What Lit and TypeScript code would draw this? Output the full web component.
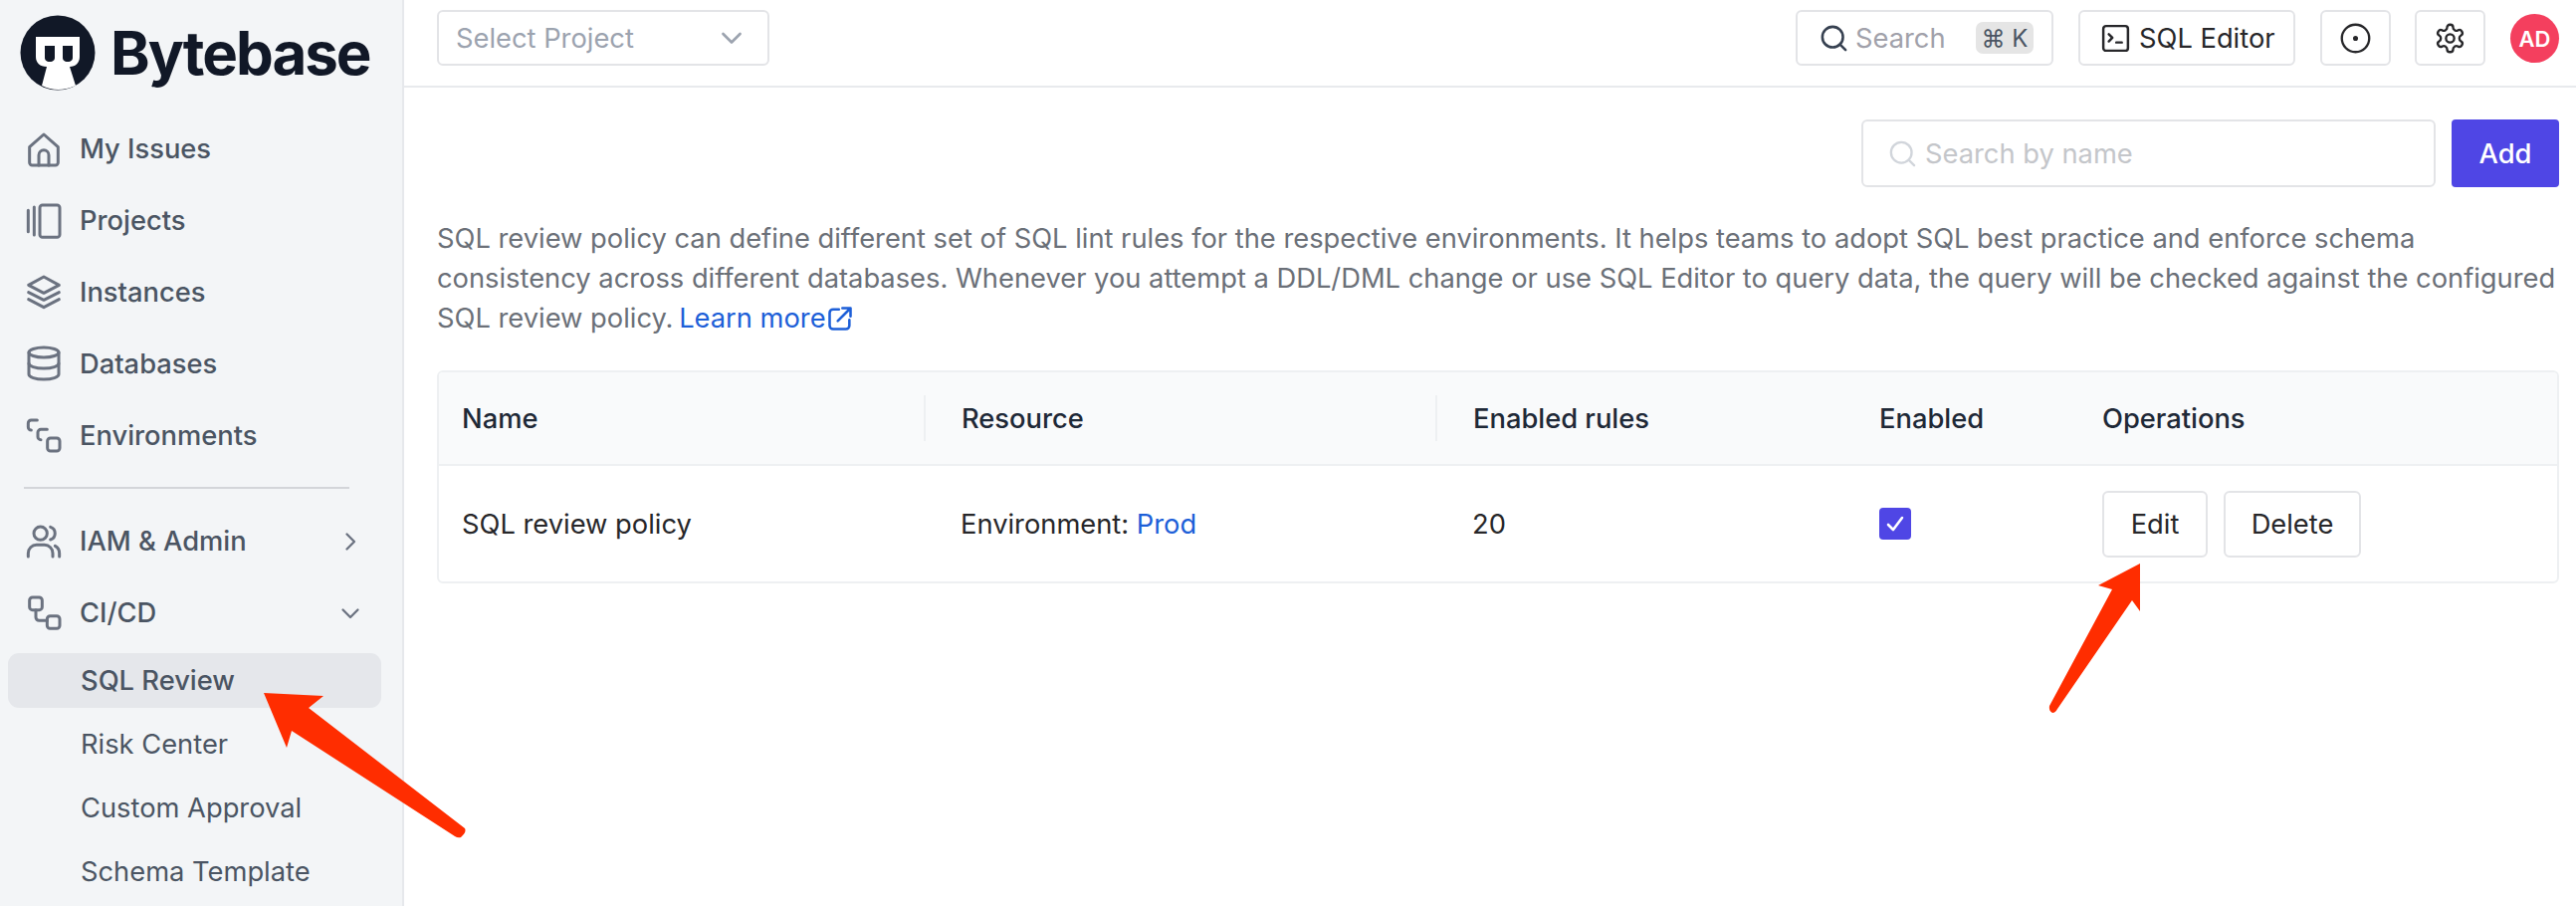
import { LitElement, html, css, svg } from "lit";
import { customElement } from "lit/decorators.js";

const ic = (body: unknown, cls = "ic") => html`<svg class=${cls} viewBox="0 0 24 24" fill="none" stroke="currentColor" stroke-linecap="round" stroke-linejoin="round">${body}</svg>`;

const icons = {
  home: svg`<path d="M3.4 10.6 12 3l8.6 7.6V20a1.6 1.6 0 0 1-1.6 1.6H5A1.6 1.6 0 0 1 3.4 20z"/><path d="M9 21.6V15.5a3 3 0 0 1 6 0v6.1"/>`,
  projects: svg`<path d="M2.6 5.5v13M6.2 3.6v16.8"/><rect x="9.6" y="2.4" width="12" height="19.4" rx="1.6"/>`,
  layers: svg`<path d="M12 3 2.8 8 12 12.8 21.2 8z"/><path d="M2.8 12.4 12 17l9.2-4.6"/><path d="M2.8 16.6 12 21.4l9.2-4.8"/>`,
  db: svg`<ellipse cx="12" cy="5.4" rx="9" ry="3"/><path d="M3 5.4v13.2c0 1.7 4 3 9 3s9-1.3 9-3V5.4"/><path d="M3 12c0 1.7 4 3 9 3s9-1.3 9-3"/>`,
  env: svg`<path d="M8 3H4.4A1.8 1.8 0 0 0 2.6 4.8v2.4c0 1 .8 1.8 1.8 1.8"/><path d="M14 8.6h-3.8a1.8 1.8 0 0 0-1.8 1.8v2.6c0 1 .8 1.8 1.8 1.8"/><rect x="14.2" y="13.8" width="7.4" height="7.8" rx="1.8"/>`,
  users: svg`<circle cx="10" cy="7" r="4"/><path d="M2.6 21v-2a5 5 0 0 1 5-5h4.8a5 5 0 0 1 5 5v2"/><path d="M16 3.2a4 4 0 0 1 0 7.6"/><path d="M21.4 21v-2a5 5 0 0 0-2.6-4.4"/>`,
  flow: svg`<rect x="3.4" y="2.4" width="7.6" height="7.6" rx="1.8"/><rect x="14" y="13.6" width="7.6" height="7.6" rx="1.8"/><path d="M7.2 10v4.4c0 1.1.9 2 2 2H14"/>`,
  right: svg`<path d="m9 5.6 6.4 6.4L9 18.4"/>`,
  down: svg`<path d="m5.6 9 6.4 6.4L18.4 9"/>`,
  search: svg`<circle cx="11" cy="11" r="8"/><path d="m21 21-4.3-4.3"/>`,
  term: svg`<rect x="3" y="3" width="18" height="18" rx="2"/><path d="m7 9 2.6 2.6L7 14.2M12.5 15h4"/>`,
  dot: svg`<circle cx="12" cy="12" r="10"/><circle cx="12" cy="12" r="1" fill="currentColor"/>`,
  gear: svg`<path d="M12.2 2h-.4a2 2 0 0 0-2 2v.2a2 2 0 0 1-1 1.7l-.4.3a2 2 0 0 1-2 0l-.2-.1a2 2 0 0 0-2.7.7l-.2.4a2 2 0 0 0 .7 2.7l.2.1a2 2 0 0 1 1 1.7v.5a2 2 0 0 1-1 1.8l-.2.1a2 2 0 0 0-.7 2.7l.2.4a2 2 0 0 0 2.7.7l.2-.1a2 2 0 0 1 2 0l.4.3a2 2 0 0 1 1 1.7v.2a2 2 0 0 0 2 2h.4a2 2 0 0 0 2-2v-.2a2 2 0 0 1 1-1.7l.4-.3a2 2 0 0 1 2 0l.2.1a2 2 0 0 0 2.7-.7l.2-.4a2 2 0 0 0-.7-2.7l-.2-.1a2 2 0 0 1-1-1.8v-.5a2 2 0 0 1 1-1.7l.2-.1a2 2 0 0 0 .7-2.7l-.2-.4a2 2 0 0 0-2.7-.7l-.2.1a2 2 0 0 1-2 0l-.4-.3a2 2 0 0 1-1-1.7V4a2 2 0 0 0-2-2z"/><circle cx="12" cy="12" r="3"/>`,
  ext: svg`<path d="M11 4H6a3 3 0 0 0-3 3v11a3 3 0 0 0 3 3h11a3 3 0 0 0 3-3v-5"/><path d="M14 3h7v7M21 3 10 14"/>`,
};

@customElement("app-root")
export class AppRoot extends LitElement {
  static styles = css`
    :host { display: block; height: 910px; overflow: hidden; position: relative; background: #fff; font-family: Inter, "Noto Sans", sans-serif; font-size: 27.3px; color: #1f2937; }
    * { box-sizing: border-box; }
    .app { display: flex; height: 910px; }
    .side { width: 406px; flex: none; background: #f3f5f7; border-right: 2px solid #e6e8ec; display: flex; flex-direction: column; overflow: hidden; }
    .logo { height: 114px; flex: none; display: flex; align-items: flex-start; padding: 15px 0 0 20px; gap: 15px; }
    .logo svg { width: 76px; height: 76px; flex: none; }
    .logo span { font-size: 60px; font-weight: 700; color: #111827; line-height: 70px; letter-spacing: -2px; margin-top: 3px; }
    .row { height: 71.8px; flex: none; display: flex; align-items: center; padding-left: 24px; padding-right: 38px; color: #4b5563; font-weight: 500; }
    .row .ic { width: 40px; height: 40px; stroke-width: 1.8; color: #6b7280; margin-right: 16px; flex: none; }
    .row .chev { width: 28px; height: 28px; stroke-width: 2; color: #6b7280; margin-left: auto; margin-right: 0; }
    .rule { height: 2px; background: #d3d5d9; margin: 16px 53px 17px 24px; flex: none; }
    .sub { height: 55px; flex: none; margin: 0 21px 9px 8px; padding-left: 73px; display: flex; align-items: center; border-radius: 11px; color: #4b5563; }
    .subs { margin-top: 4px; display: flex; flex-direction: column; }
    .sub.on { background: #e5e7eb; font-weight: 500; }
    .main { flex: 1; min-width: 0; display: flex; flex-direction: column; }
    .top { height: 88px; flex: none; border-bottom: 2px solid #e8eaed; display: flex; align-items: flex-start; padding: 10px 17px 0 33px; }
    .box { height: 56px; border: 2px solid #e3e4e7; border-radius: 6px; display: flex; align-items: center; background: #fff; }
    .select { width: 334px; padding: 0 20px 0 17px; color: #9ca3af; justify-content: space-between; }
    .select .ic { width: 32px; height: 32px; stroke-width: 2; }
    .spacer { flex: 1; }
    .gsearch { width: 259px; padding: 0 18px 0 21px; margin-right: 25px; color: #a1a1aa; }
    .gsearch .ic { width: 31px; height: 31px; stroke-width: 2; color: #374151; margin-right: 6px; flex: none; }
    kbd { font: inherit; font-size: 24px; margin-left: auto; width: 58px; height: 32px; background: #e5e5e5; color: #4b5563; border-radius: 7px; display: flex; align-items: center; justify-content: center; }
    .sql { width: 218px; padding: 0 0 0 19px; color: #27272a; margin-right: 25px; }
    .sql .ic { width: 33px; height: 33px; stroke-width: 1.8; margin-right: 7px; flex: none; }
    .sq { width: 71px; justify-content: center; margin-right: 24px; color: #27272a; }
    .sq .ic { width: 33px; height: 33px; stroke-width: 1.7; }
    .sq.last { margin-right: 25px; }
    .av { width: 49px; height: 49px; border-radius: 50%; background: #f43f5e; color: #fff; font-size: 22px; font-weight: 600; display: flex; align-items: center; justify-content: center; margin-top: 4px; flex: none; }
    .content { padding: 32px 17px 0 33px; display: flex; flex-direction: column; }
    .tools { display: flex; justify-content: flex-end; gap: 16px; height: 68px; }
    .find { width: 577px; height: 68px; padding: 0 0 0 24px; color: #c4c6ca; }
    .find .ic { width: 31px; height: 31px; stroke-width: 1.8; color: #d1d5db; margin-right: 7px; flex: none; }
    .add { width: 108px; height: 68px; background: #4f46e5; color: #fff; border-radius: 4px; font-weight: 500; display: flex; align-items: center; justify-content: center; }
    p { margin: 32px 0 32px; line-height: 40px; color: #6b7078; }
    p a, .lnk { color: #1d5fd8; text-decoration: none; }
    p a { margin-left: -2px; }
    p a .ic { width: 28px; height: 28px; stroke-width: 2.2; vertical-align: -5px; }
    .table { border: 2px solid #eef0f2; border-radius: 6px; height: 214px; display: flex; flex-direction: column; overflow: hidden; }
    .tr { display: grid; grid-template-columns: 500px 514px 409px 224px 1fr; align-items: center; }
    .th { height: 94px; background: #f9fafb; border-bottom: 2px solid #eef0f2; font-weight: 500; color: #1f2937; flex: none; }
    .td { flex: 1; color: #27272a; }
    .c { padding-left: 24px; display: flex; align-items: center; }
    .c.first { padding-left: 23px; }
    .sep { height: 46px; display: flex; align-items: center; border-left: 2px solid #eef0f2; margin-left: -13px; padding-left: 36px; }
    .chk { width: 32px; height: 32px; background: #4f46e5; border-radius: 4px; display: flex; align-items: center; justify-content: center; }
    .chk svg { width: 24px; height: 24px; stroke: #fff; stroke-width: 2.6; fill: none; stroke-linecap: round; stroke-linejoin: round; }
    .ops { gap: 16px; }
    .btn { height: 67px; border: 2px solid #e3e4e7; border-radius: 6px; display: flex; align-items: center; justify-content: center; color: #27272a; }
    .edit { width: 106px; }
    .del { width: 138px; }
    .arrows { position: absolute; left: 0; top: 0; width: 2588px; height: 910px; pointer-events: none; }
  `;

  render() {
    const rows: [keyof typeof icons, string][] = [
      ["home", "My Issues"], ["projects", "Projects"], ["layers", "Instances"], ["db", "Databases"], ["env", "Environments"],
    ];
    return html`
      <div class="app">
        <aside class="side">
          <div class="logo">
            <svg viewBox="0 0 76 76">
              <circle cx="38" cy="38" r="37.5" fill="#111827"/>
              <path d="M16 22H60V42C60 48 56 52 50 52L56 71Q38 79 22 71L27 52C20 52 16 48 16 42Z" fill="#fff"/>
              <path d="M25 31h10v12c0 2-1.500 4-5 4s-5-2-5-4zM43 31h10v12c0 2-1.500 4-5 4s-5-2-5-4z" fill="#111827"/>
            </svg>
            <span>Bytebase</span>
          </div>
          ${rows.map(([i, t]) => html`<div class="row">${ic(icons[i])}${t}</div>`)}
          <div class="rule"></div>
          <div class="row">${ic(icons.users)}IAM &amp; Admin${ic(icons.right, "ic chev")}</div>
          <div class="row">${ic(icons.flow)}CI/CD${ic(icons.down, "ic chev")}</div>
          <div class="subs">
            <div class="sub on">SQL Review</div>
            <div class="sub">Risk Center</div>
            <div class="sub">Custom Approval</div>
            <div class="sub">Schema Template</div>
          </div>
        </aside>
        <div class="main">
          <header class="top">
            <div class="box select">Select Project${ic(icons.down)}</div>
            <div class="spacer"></div>
            <div class="box gsearch">${ic(icons.search)}Search<kbd>⌘ K</kbd></div>
            <div class="box sql">${ic(icons.term)}SQL Editor</div>
            <div class="box sq">${ic(icons.dot)}</div>
            <div class="box sq last">${ic(icons.gear)}</div>
            <div class="av">AD</div>
          </header>
          <section class="content">
            <div class="tools">
              <div class="box find">${ic(icons.search)}Search by name</div>
              <div class="add">Add</div>
            </div>
            <p>SQL review policy can define different set of SQL lint rules for the respective environments. It helps teams to adopt SQL best practice and enforce schema consistency across different databases. Whenever you attempt a DDL/DML change or use SQL Editor to query data, the query will be checked against the configured SQL review policy. <a>Learn more${ic(icons.ext)}</a></p>
            <div class="table">
              <div class="tr th">
                <div class="c first">Name</div>
                <div class="sep">Resource</div>
                <div class="sep">Enabled rules</div>
                <div class="c">Enabled</div>
                <div class="c">Operations</div>
              </div>
              <div class="tr td">
                <div class="c first">SQL review policy</div>
                <div class="c">Environment:&nbsp;<span class="lnk">Prod</span></div>
                <div class="c">20</div>
                <div class="c"><span class="chk"><svg viewBox="0 0 24 24"><path d="m5 13 5 5L19 6"/></svg></span></div>
                <div class="c ops"><div class="btn edit">Edit</div><div class="btn del">Delete</div></div>
              </div>
            </div>
          </section>
        </div>
      </div>
      <svg class="arrows" viewBox="0 0 2588 910">
        <path d="M265 696 325 699 310 711 467 832Q469 836 463 841 460 842 457 840L293 734 288 751z" fill="#ff2d00"/>
        <path d="M2150 566 2108 588 2122 592 2059 709Q2058 714 2062 716 2065 716 2067 712L2142 603 2150 614z" fill="#ff2d00"/>
      </svg>
    `;
  }
}
